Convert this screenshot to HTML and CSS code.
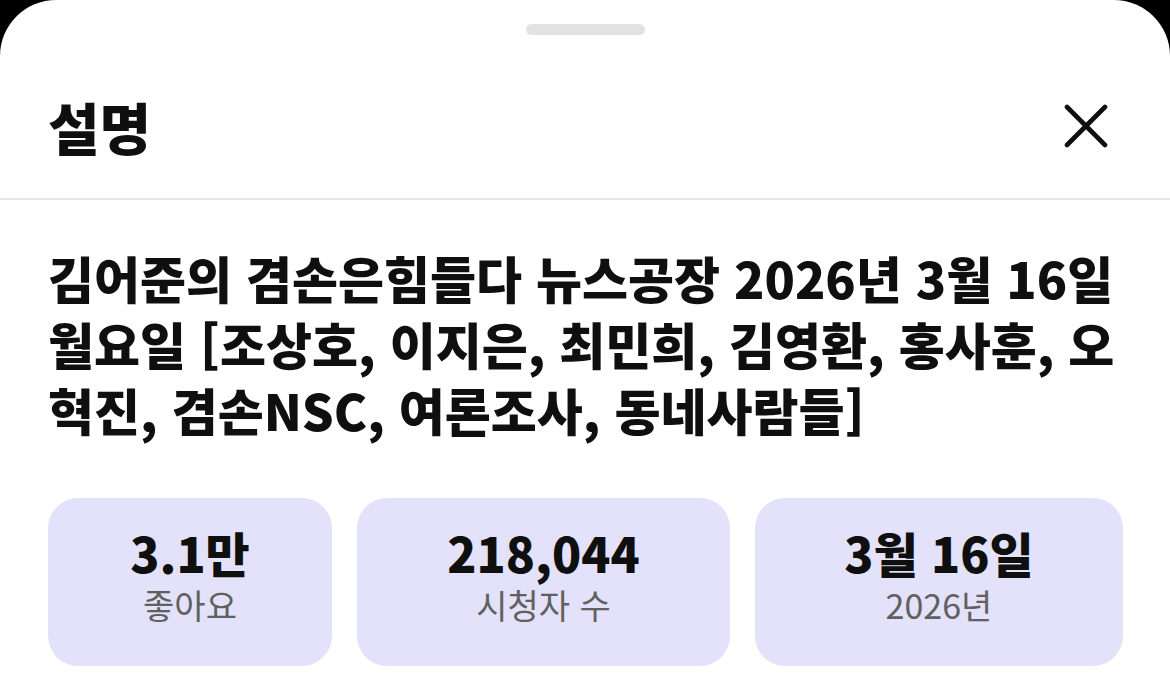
FILE: index.html
```html
<!DOCTYPE html>
<html lang="ko">
<head>
<meta charset="utf-8">
<title>설명</title>
<link rel="stylesheet" href="styles.css">
</head>
<body>
<div class="sheet">
  <div class="handle-row"><div class="handle"></div></div>
  <header class="header">
    <h1 class="header-title">설명</h1>
    <button class="close" aria-label="닫기">
      <svg viewBox="0 0 44 44" width="44" height="44"><path d="M3 3 L41 41 M41 3 L3 41" stroke="#0f0f0f" stroke-width="4.6" stroke-linecap="round" fill="none"/></svg>
    </button>
  </header>
  <main class="content">
    <p class="video-title">김어준의 겸손은힘들다 뉴스공장 2026년 3월 16일 월요일 [조상호, 이지은, 최민희, 김영환, 홍사훈, 오혁진, 겸손NSC, 여론조사, 동네사람들]</p>
    <div class="stats">
      <div class="stat"><div class="stat-value">3.1만</div><div class="stat-label">좋아요</div></div>
      <div class="stat"><div class="stat-value">218,044</div><div class="stat-label">시청자 수</div></div>
      <div class="stat"><div class="stat-value">3월 16일</div><div class="stat-label">2026년</div></div>
    </div>
  </main>
</div>
</body>
</html>
```

FILE: styles.css
```css
html, body {
  margin: 0;
  padding: 0;
  background: #000;
  height: 100%;
}
body {
  font-family: "Noto Sans CJK KR", "Noto Sans", sans-serif;
  color: #0f0f0f;
  overflow: hidden;
}
.sheet {
  background: #fff;
  border-radius: 56px 56px 0 0;
  min-height: 100vh;
}
.handle-row {
  display: flex;
  justify-content: center;
  padding-top: 24px;
}
.handle {
  width: 119px;
  height: 11px;
  border-radius: 6px;
  background: #e3e3e3;
}
.header {
  display: flex;
  align-items: center;
  justify-content: space-between;
  padding: 58px 62px 39px 48px;
  border-bottom: 2.5px solid #e5e5e5;
}
.header-title {
  margin: 0;
  font-size: 56px;
  line-height: 66px;
  font-weight: 900;
}
.close {
  border: 0;
  background: none;
  padding: 0;
  width: 44px;
  height: 44px;
  display: flex;
}
.content {
  padding: 0 47px 0 48px;
}
.video-title {
  margin: 44px 0 0;
  font-size: 50px;
  line-height: 66px;
  font-weight: 900;
}
.stats {
  display: grid;
  grid-template-columns: 284fr 373fr 368fr;
  gap: 25px;
  margin-top: 56px;
}
.stat {
  background: #e3e2fa;
  border-radius: 30px;
  text-align: center;
  padding: 24px 10px 38px;
}
.stat-value {
  font-size: 48px;
  line-height: 60px;
  font-weight: 900;
}
.stat-label {
  font-size: 34px;
  line-height: 46px;
  color: #606060;
}
```
